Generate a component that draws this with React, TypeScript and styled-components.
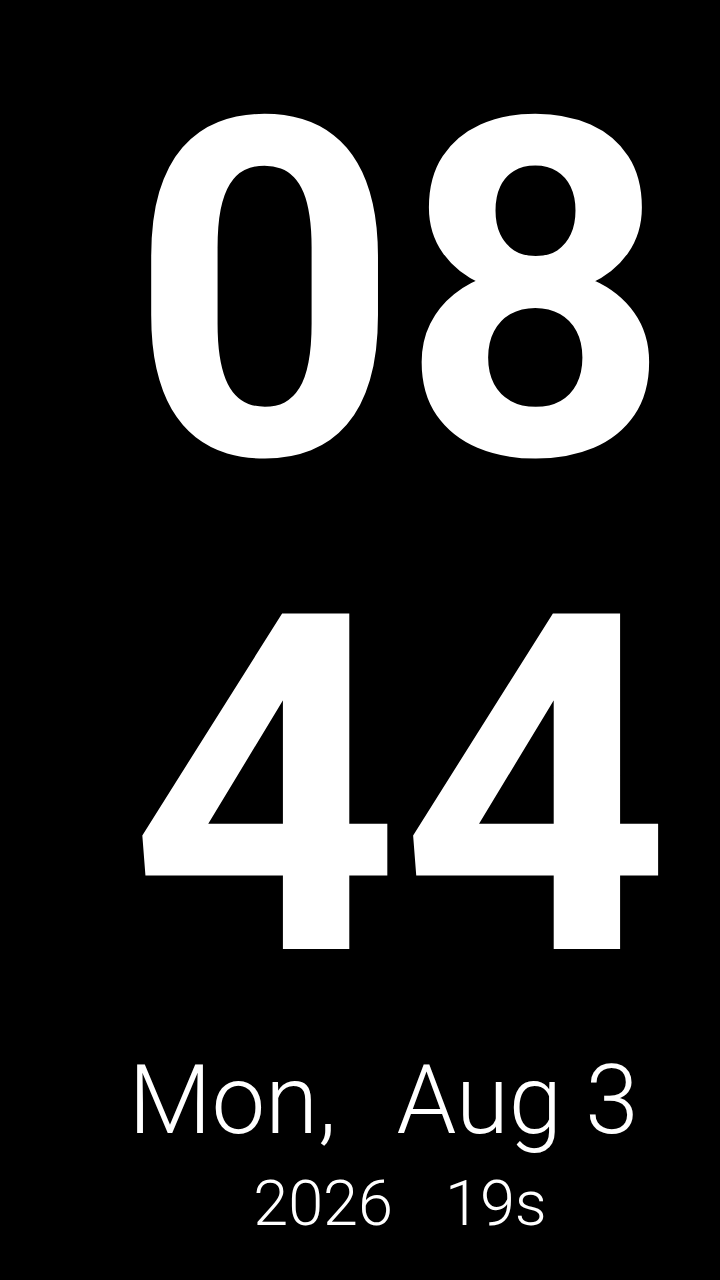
import React from 'react';
import styled, { createGlobalStyle } from 'styled-components';

const GlobalStyle = createGlobalStyle`
	html, body {
		margin: 0;
		padding: 0;
		background: #000;
	}
	body {
		font-family: Roboto, "Noto Sans", sans-serif;
		color: #fff;
	}
`;

const Screen = styled.div`
	width: 720px;
	height: 1280px;
	box-sizing: border-box;
	padding: 45px 0 0 80px;
	display: flex;
	flex-direction: column;
	align-items: center;
	background: #000;
	overflow: hidden;
`;

const TimeRow = styled.div`
	font-size: 472px;
	font-weight: 700;
	line-height: 495px;
	letter-spacing: 0;
`;

const DateRow = styled.div<{ size: number; gap: number; shift?: number }>`
	display: flex;
	gap: ${({ gap }) => gap}px;
	font-size: ${({ size }) => size}px;
	font-weight: 300;
	line-height: ${({ size }) => size}px;
	margin-left: ${({ shift = 0 }) => shift}px;
`;

const DayLine = styled(DateRow)`
	margin-top: 15px;
	line-height: 100px;
`;

const YearLine = styled(DateRow)`
	margin-top: 22px;
`;

export default function App() {
	return (
		<>
			<GlobalStyle />
			<Screen>
				<TimeRow>08</TimeRow>
				<TimeRow>44</TimeRow>
				<DayLine size={96} gap={60} shift={-33}>
					<span>Mon,</span>
					<span>Aug 3</span>
				</DayLine>
				<YearLine size={63} gap={52}>
					<span>2026</span>
					<span>19s</span>
				</YearLine>
			</Screen>
		</>
	);
}
